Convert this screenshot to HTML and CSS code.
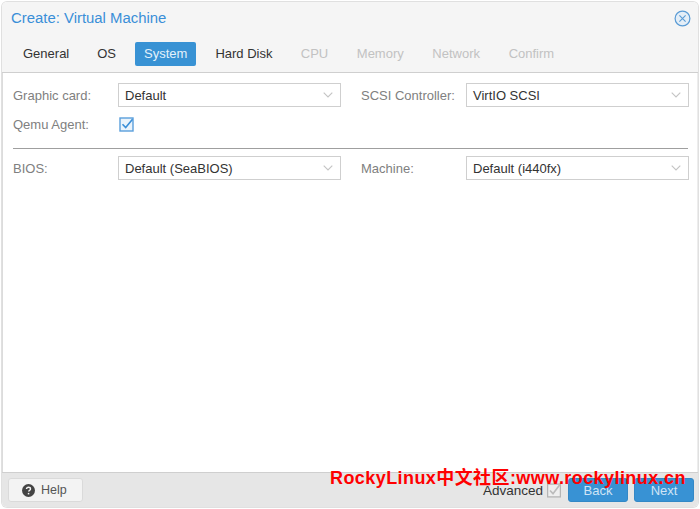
FILE: index.html
```html
<!DOCTYPE html>
<html lang="en">
<head>
<meta charset="utf-8">
<title>Create: Virtual Machine</title>
<link rel="stylesheet" href="styles.css">
</head>
<body>
<div class="window">
  <header class="head">
    <div class="title-row">
      <h1 class="title">Create: Virtual Machine</h1>
      <svg class="close" width="17" height="17" viewBox="0 0 17 17" aria-hidden="true"><circle cx="8.5" cy="8.5" r="7.4" fill="#e4eef7" stroke="#5a9bd5" stroke-width="1.2"/><path d="M5.4 5.4l6.2 6.2M11.6 5.4l-6.2 6.2" stroke="#5a9bd5" stroke-width="1.1" fill="none"/></svg>
    </div>
    <nav class="tabs">
      <span class="tab">General</span>
      <span class="tab">OS</span>
      <span class="tab active">System</span>
      <span class="tab">Hard Disk</span>
      <span class="tab off">CPU</span>
      <span class="tab off">Memory</span>
      <span class="tab off">Network</span>
      <span class="tab off">Confirm</span>
    </nav>
  </header>
  <main class="body">
    <div class="grid">
      <div class="field"><span class="label">Graphic card:</span><div class="select"><span>Default</span><svg class="chev" width="10" height="6" viewBox="0 0 10 6"><path d="M.7.7L5 5l4.3-4.3" fill="none" stroke="#c4c4c4" stroke-width="1.1"/></svg></div></div>
      <div class="field"><span class="label">SCSI Controller:</span><div class="select"><span>VirtIO SCSI</span><svg class="chev" width="10" height="6" viewBox="0 0 10 6"><path d="M.7.7L5 5l4.3-4.3" fill="none" stroke="#c4c4c4" stroke-width="1.1"/></svg></div></div>
      <div class="field short"><span class="label">Qemu Agent:</span><svg class="check" width="15" height="15" viewBox="0 0 15 15"><rect x="1" y="1" width="13" height="13" fill="#eaf3fb" stroke="#5a9fdc" stroke-width="1.4"/><path d="M3.5 7.2l3.2 3.4 6.8-8.4" fill="none" stroke="#3a8fd8" stroke-width="1.6"/></svg></div>
    </div>
    <hr class="rule">
    <div class="grid">
      <div class="field"><span class="label">BIOS:</span><div class="select"><span>Default (SeaBIOS)</span><svg class="chev" width="10" height="6" viewBox="0 0 10 6"><path d="M.7.7L5 5l4.3-4.3" fill="none" stroke="#c4c4c4" stroke-width="1.1"/></svg></div></div>
      <div class="field"><span class="label">Machine:</span><div class="select"><span>Default (i440fx)</span><svg class="chev" width="10" height="6" viewBox="0 0 10 6"><path d="M.7.7L5 5l4.3-4.3" fill="none" stroke="#c4c4c4" stroke-width="1.1"/></svg></div></div>
    </div>
  </main>
  <footer class="foot">
    <button class="btn help"><svg width="13" height="13" viewBox="0 0 13 13" aria-hidden="true"><circle cx="6.5" cy="6.5" r="6.5" fill="#444"/><path d="M4.5 5.1c0-1.2.9-1.9 2-1.9s2 .7 2 1.7c0 1.4-1.9 1.4-1.9 2.7" fill="none" stroke="#f5f5f5" stroke-width="1.4"/><rect x="5.8" y="8.9" width="1.5" height="1.5" fill="#f5f5f5"/></svg>Help</button>
    <span class="adv">Advanced</span>
    <svg class="advcheck" width="14" height="15" viewBox="0 0 14 15" aria-hidden="true"><rect x=".6" y="1.1" width="12.8" height="12.8" fill="#efefef" stroke="#b5b5b5" stroke-width="1.3"/><path d="M3 7.5l3 3.2 6.6-8.6" fill="none" stroke="#bcbcbc" stroke-width="1.7"/></svg>
    <button class="btn primary">Back</button>
    <button class="btn primary">Next</button>
  </footer>
</div>
<div class="mark">RockyLinux中文社区:www.rockylinux.cn</div>
</body>
</html>
```
FILE: styles.css
```css
* { box-sizing: border-box; }
html, body { margin: 0; height: 100%; }
body {
  background: #fff;
  padding: 2px;
  position: relative;
  overflow: hidden;
  font-family: "Liberation Sans", Arial, sans-serif;
  font-size: 13px;
  color: #222;
}
.window {
  height: 505px;
  width: 696px;
  border-radius: 5px;
  box-shadow: 0 0 0 1px #e0e0e0;
  display: flex;
  flex-direction: column;
  overflow: hidden;
  background: #fff;
}
.head {
  height: 71px;
  flex: none;
  background: #f5f5f5;
  border-bottom: 1px solid #cfcfcf;
}
.title-row {
  height: 40px;
  display: flex;
  align-items: flex-start;
  justify-content: space-between;
  padding: 8px 7px 0 9px;
}
.title {
  margin: 0;
  font-size: 14.9px;
  font-weight: 400;
  line-height: 17px;
  color: #3a8fd8;
}
.tabs {
  display: flex;
  gap: 10px;
  padding-left: 12px;
}
.tab {
  height: 24px;
  line-height: 24px;
  padding: 0 9px;
  border-radius: 2px;
  color: #333;
}
.tab.active { background: #3892d4; color: #e4f1fb; }
.tab.off { color: #c2c2c2; padding: 0 9.3px; }
.body {
  flex: 1;
  padding: 10px 9px 0 10px;
  border-left: 1px solid #dcdcdc;
  border-right: 1px solid #ededed;
}
.grid {
  display: grid;
  grid-template-columns: 328px 328px;
  column-gap: 20px;
  row-gap: 5px;
}
.field {
  height: 24px;
  display: flex;
  align-items: center;
  color: #808080;
}
.field.short { grid-column: 1 / -1; }
.label { width: 105px; flex: none; }
.select {
  flex: 1;
  height: 24px;
  border: 1px solid #cfcfcf;
  background: #fff;
  color: #333;
  padding: 0 7px 0 6px;
  display: flex;
  align-items: center;
  justify-content: space-between;
}
.check { margin-left: 1px; }
.rule {
  border: 0;
  height: 1px;
  background: #9f9f9f;
  margin: 12px 0 7px;
}
.foot {
  height: 35px;
  flex: none;
  background: #e6e6e6;
  border-top: 1px solid #cfcfcf;
  display: flex;
  align-items: center;
  padding: 0 4px 0 6px;
}
.btn {
  height: 24px;
  border-radius: 3px;
  font: inherit;
  cursor: pointer;
}
.help {
  width: 75px;
  background: #f3f3f3;
  border: 1px solid #dadada;
  color: #555;
  font-size: 12.5px;
  display: flex;
  align-items: center;
  gap: 6px;
  padding: 0 0 0 13px;
  margin-right: auto;
}
.adv { color: #333; font-size: 13.5px; margin-right: 4px; }
.advcheck { margin-right: 7px; }
.primary {
  width: 60px;
  background: #3892d4;
  border: 1px solid #3488c6;
  color: #cfe4f5;
}
.primary + .primary { margin-left: 6px; }
.mark {
  position: absolute;
  left: 330px;
  top: 468px;
  font-family: "Liberation Sans", "Noto Sans CJK SC", sans-serif;
  font-weight: 700;
  font-size: 18px;
  line-height: 21px;
  letter-spacing: .42px;
  color: #f00;
  white-space: nowrap;
}
```
